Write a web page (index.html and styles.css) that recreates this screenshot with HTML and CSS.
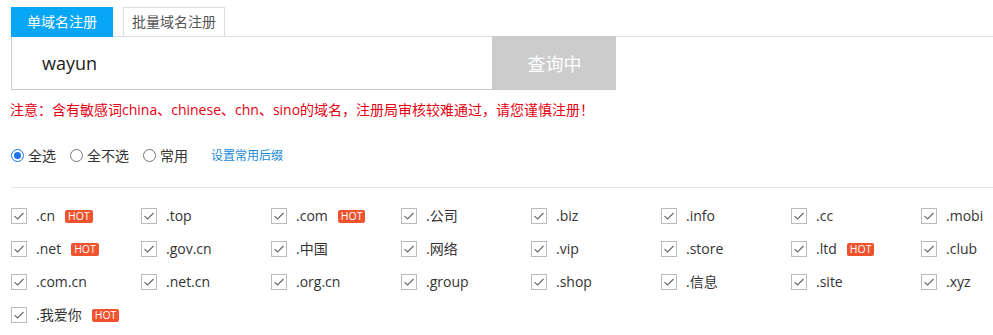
FILE: index.html
```html
<!DOCTYPE html>
<html lang="zh-CN">

<head>
  <meta charset="UTF-8">
  <meta name="viewport" content="width=device-width, initial-scale=1.0">
  <title>域名注册</title>
  <link rel="stylesheet" href="styles.css">
</head>

<body>
  <div class="wrap">
    <div class="tabs">
      <div class="tab active">单域名注册</div>
      <div class="tab">批量域名注册</div>
    </div>

    <div class="search">
      <div class="search-input">wayun</div>
      <button class="search-btn">查询中</button>
    </div>

    <p class="notice">注意：含有敏感词china、chinese、chn、sino的域名，注册局审核较难通过，请您谨慎注册！</p>

    <div class="choose">
      <label class="radio"><span class="dot checked"></span>全选</label>
      <label class="radio"><span class="dot"></span>全不选</label>
      <label class="radio"><span class="dot"></span>常用</label>
      <a class="set-link" href="#">设置常用后缀</a>
    </div>

    <div class="suffix-list" id="suffixList"></div>
  </div>

  <script>
    const suffixes = [
      ['.cn', true], ['.top'], ['.com', true], ['.公司'], ['.biz'], ['.info'], ['.cc'], ['.mobi'],
      ['.net', true], ['.gov.cn'], ['.中国'], ['.网络'], ['.vip'], ['.store'], ['.ltd', true], ['.club'],
      ['.com.cn'], ['.net.cn'], ['.org.cn'], ['.group'], ['.shop'], ['.信息'], ['.site'], ['.xyz'],
      ['.我爱你', true]
    ];
    const list = document.getElementById('suffixList');
    const check = '<svg width="16" height="16" viewBox="0 0 16 16"><path d="M3.5 8.2 L6.6 11 L12.5 5" fill="none" stroke="#666" stroke-width="1.1"/></svg>';

    for (const [name, hot] of suffixes) {
      const item = document.createElement('label');
      item.className = 'suffix';
      item.innerHTML = '<span class="box">' + check + '</span><span class="name">' + name + '</span>' +
        (hot ? '<span class="hot">HOT</span>' : '');
      list.appendChild(item);
    }
  </script>
</body>

</html>
```

FILE: styles.css
```css
body {
  margin: 0;
  font-family: "Open Sans", "Noto Sans CJK SC", sans-serif;
  color: #333;
  background: #fff;
}

.wrap {
  padding: 7px 0 0 11px;
}

/* tabs */
.tabs {
  display: flex;
  gap: 10px;
  border-bottom: 1px solid #ddd;
  height: 29px;
}

.tab {
  width: 100px;
  height: 28px;
  line-height: 28px;
  text-align: center;
  font-size: 14px;
  color: #555;
  border: 1px solid #ddd;
  border-bottom: none;
  background: #fff;
}

.tab.active {
  width: 102px;
  height: 30px;
  line-height: 30px;
  border: none;
  background: #09a6f5;
  color: #fff;
}

/* search row */
.search {
  display: flex;
  height: 54px;
}

.search-input {
  width: 450px;
  height: 52px;
  line-height: 52px;
  padding-left: 30px;
  border: 1px solid #ccc;
  border-top: none;
  font-size: 18px;
  color: #222;
}

.search-btn {
  width: 123px;
  height: 54px;
  border: none;
  background: #ccc;
  color: #fff;
  font-family: inherit;
  font-size: 18px;
  padding: 0;
  margin-top: -1px;
}

.notice {
  margin: 10px 0 0 -1px;
  font-size: 14px;
  line-height: 18px;
  color: #e60012;
}

/* select row */
.choose {
  display: flex;
  align-items: center;
  height: 20px;
  margin-top: 26px;
  font-size: 14px;
}

.radio {
  display: flex;
  align-items: center;
  margin-right: 14px;
}

.dot {
  width: 11px;
  height: 11px;
  border: 1px solid #777;
  border-radius: 50%;
  margin-right: 4px;
  position: relative;
}

.dot.checked {
  border-color: #1a73e8;
}

.dot.checked::after {
  content: "";
  position: absolute;
  left: 2px;
  top: 2px;
  width: 7px;
  height: 7px;
  border-radius: 50%;
  background: #1a73e8;
}

.set-link {
  margin-left: 9px;
  font-size: 12px;
  color: #1a8ad8;
  text-decoration: none;
}

/* suffix grid */
.suffix-list {
  margin-top: 22px;
  border-top: 1px solid #e5e5e5;
  padding-top: 20px;
  display: grid;
  grid-template-columns: repeat(7, 130px) 1fr;
  grid-auto-rows: 33px;
}

.suffix {
  display: flex;
  align-items: flex-start;
  font-size: 14px;
  line-height: 16px;
}

.box {
  width: 14px;
  height: 14px;
  border: 1px solid #bbb;
  margin-right: 9px;
  display: flex;
}

.box svg {
  margin: -1px;
}

.name {
  white-space: nowrap;
}

.hot {
  margin: 2px 0 0 10px;
  height: 13px;
  line-height: 13px;
  padding: 0 3px;
  border-radius: 2px;
  background: #f0532d;
  color: #fff;
  font-size: 10.5px;
}
```
